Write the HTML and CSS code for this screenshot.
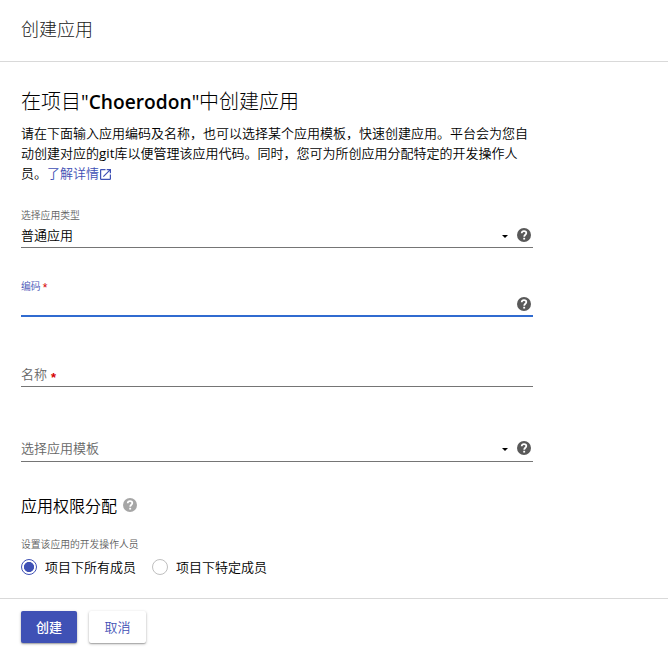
FILE: index.html
```html
<!DOCTYPE html>
<html lang="zh-CN">
<head>
<meta charset="utf-8">
<title>创建应用</title>
<link rel="stylesheet" href="styles.css">
</head>
<body>
<svg width="0" height="0" class="defs">
  <symbol id="help" viewBox="2 2 20 20"><circle cx="12" cy="12" r="10"/><path d="M8.7 9.6C8.8 7.4 10.1 6.4 12 6.4c2 0 3.3 1.1 3.3 2.8 0 2.5-3 2.5-3 5.2" fill="none" stroke="#fff" stroke-width="2.5"/><path d="M10.9 16h2.7v2.5h-2.7z" fill="#fff"/></symbol>
</svg>
<div class="page">
  <header class="header">创建应用</header>
  <main class="content">
    <h2 class="title">在项目<span class="latin">"<b>Choerodon</b>"</span>中创建应用</h2>
    <p class="intro">请在下面输入应用编码及名称，也可以选择某个应用模板，快速创建应用。平台会为您自动创建对应的<span class="git">git</span>库以便管理该应用代码。同时，您可为所创应用分配特定的开发操作人员。<a class="link">了解详情<svg class="open" viewBox="3 3 18 18"><path d="M19 19H5V5h7V3H5c-1.11 0-2 .9-2 2v14c0 1.1.89 2 2 2h14c1.1 0 2-.9 2-2v-7h-2v7zM14 3v2h3.59l-9.83 9.83 1.41 1.41L19 6.41V10h2V3h-7z"/></svg></a></p>
    <div class="field type">
      <div class="label">选择应用类型</div>
      <div class="control"><span class="value">普通应用</span><i class="caret"></i><svg class="help"><use href="#help"/></svg></div>
    </div>
    <div class="field code">
      <div class="label">编码 <em class="star">*</em></div>
      <div class="control"><span class="value"></span><svg class="help"><use href="#help"/></svg></div>
    </div>
    <div class="field name">
      <div class="control"><span class="value">名称 <em class="star">*</em></span></div>
    </div>
    <div class="field template">
      <div class="control"><span class="value">选择应用模板</span><i class="caret"></i><svg class="help"><use href="#help"/></svg></div>
    </div>
    <h3 class="section">应用权限分配<svg class="help"><use href="#help"/></svg></h3>
    <div class="label">设置该应用的开发操作人员</div>
    <div class="radios">
      <label class="radio on"><i class="dot"></i>项目下所有成员</label>
      <label class="radio"><i class="dot"></i>项目下特定成员</label>
    </div>
  </main>
  <footer class="footer">
    <button class="btn primary">创建</button>
    <button class="btn">取消</button>
  </footer>
</div>
</body>
</html>
```
FILE: styles.css
```css
* { box-sizing: border-box; }
body {
  margin: 0;
  background: #fff;
  color: #000;
  font: 350 13px/20px "Noto Sans CJK SC", sans-serif;
}
.defs { display: block; }
.page { height: 649px; display: flex; flex-direction: column; overflow: hidden; }
.header {
  height: 62px;
  padding: 0 21px;
  border-bottom: 1px solid #d9d9d9;
  font-size: 18px;
  font-weight: 300;
  line-height: 57px;
  color: #202020;
}
.content { height: 536px; padding: 24px 21px 0; }
.title { margin: 0; font-size: 20px; line-height: 30px; font-weight: 300; white-space: nowrap; }
.latin { display: inline-block; width: 118px; text-align: center; font-family: "Open Sans", sans-serif; font-size: 19.2px; font-weight: 400; line-height: 1; }
.latin b { font-weight: 560; }
.intro { margin: 7px 0 0; width: 512px; }
.git { font-family: "Open Sans", sans-serif; font-size: 13.4px; font-weight: 400; line-height: 1; }
.link { color: #3f51b5; white-space: nowrap; }
.open { width: 11px; height: 11px; margin-left: 1px; vertical-align: -2px; fill: currentColor; }
.label { font-size: 9.8px; line-height: 14px; color: #606060; }
.star {
  font: 700 13px/10px "Liberation Sans", sans-serif;
  color: #d50000;
  vertical-align: -3px;
  margin-left: 1px;
}
.label .star { font-size: 12px; font-weight: 400; vertical-align: -2px; margin-left: 0; }
.field { width: 512px; border-bottom: 1px solid #757575; }
.control { display: flex; align-items: center; padding-right: 2px; height: 26px; }
.value { flex: 1; padding-bottom: 1px; }
.caret {
  width: 6px;
  height: 3px;
  margin-right: 9px;
  margin-top: 2px;
  border: 3px solid transparent;
  border-top-color: #000;
  border-bottom: 0;
}
.help { width: 14px; height: 14px; fill: #595959; }
.type { height: 40px; margin-top: 25px; }
.code { height: 38px; margin-top: 31px; border-bottom: 2px solid #306bd0; }
.code .label { height: 14px; color: #3f51b5; }
.code .control { height: 21px; }
.name { margin-top: 43px; }
.name .value { padding: 2px 0 0; }
.template { margin-top: 48px; }
.name .value, .template .value { color: #666; }
.section {
  display: flex;
  align-items: center;
  gap: 6px;
  margin: 31px 0 20px;
  font-size: 16px;
  line-height: 24px;
  font-weight: 350;
}
.section .help { fill: #a6a6a6; }
.radios { display: flex; gap: 16px; margin-top: 6px; }
.radio { display: flex; align-items: center; gap: 8px; }
.dot {
  width: 16px;
  height: 16px;
  border: 1px solid #bfbfbf;
  border-radius: 50%;
}
.on .dot { border-color: #3f51b5; background: radial-gradient(circle, #3f51b5 4.7px, #fff 5.4px); }
.footer { flex: 1; display: flex; gap: 12px; padding: 12px 21px 0; border-top: 1px solid #d9d9d9; }
.btn {
  width: 57px;
  height: 32px;
  padding: 0 0 1px;
  border: 0;
  border-radius: 2px;
  background: #fff;
  color: #3f51b5;
  font: inherit;
  box-shadow: 0 1px 3px rgba(0, 0, 0, .28), 0 1px 1px rgba(0, 0, 0, .18);
}
.primary { width: 56px; background: #3f51b5; color: #fff; font-weight: 500; }
```
